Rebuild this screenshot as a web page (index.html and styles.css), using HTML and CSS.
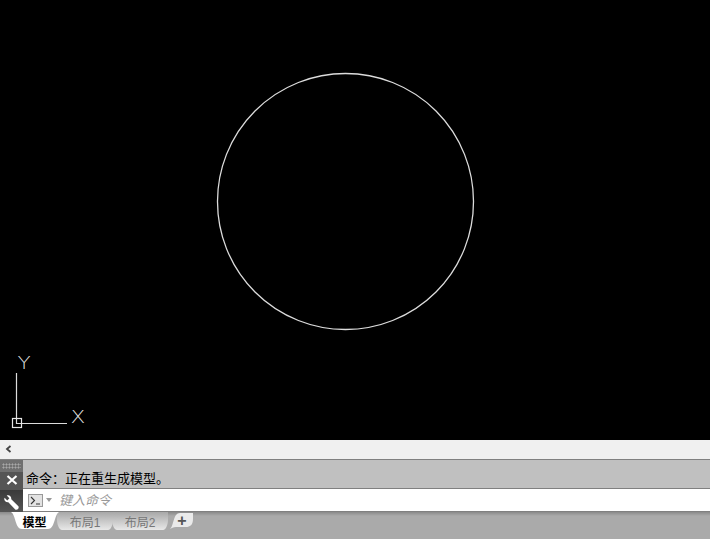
FILE: index.html
```html
<!DOCTYPE html>
<html lang="zh-CN">
<head>
	<meta charset="UTF-8">
	<title>模型</title>
	<link rel="stylesheet" href="styles.css">
</head>
<body>
	<div class="canvas">
		<svg class="drawing" width="710" height="440" viewBox="0 0 710 440">
			<circle cx="345.5" cy="201.5" r="128" fill="none" stroke="#dcdcdc" stroke-width="1.3"/>
			<path d="M16.5 373V424M17 423.5H67" fill="none" stroke="#dcdcdc" stroke-width="1.2"/>
			<rect x="12.5" y="418.5" width="9" height="9" fill="none" stroke="#e6e6e6" stroke-width="1.2"/>
			<text class="axis" transform="translate(17.500 369) scale(1.2 1)">Y</text>
			<text class="axis" transform="translate(70.500 422.500) scale(1.2 1)">X</text>
		</svg>
	</div>
	<div class="scrollbar"><span class="arrow">
		<svg width="7" height="8" viewBox="0 0 7 8"><path d="M5.5 1L2 4L5.5 7" fill="none" stroke="#444" stroke-width="1.8"/></svg>
	</span></div>
	<div class="command">
		<div class="side">
			<div class="grip"><div class="dots"></div></div>
			<div class="close">
				<svg width="12" height="12" viewBox="0 0 12 12"><path d="M1.500 2L10.500 10M10.500 2L1.500 10" stroke="#fff" stroke-width="2.2"/></svg>
			</div>
			<div class="wrench">
				<svg width="17" height="17" viewBox="0 0 16 16"><path d="M1.500 3.500L4 6L6 4L3.500 1.500C5.500 .5 8 1.800 7.800 5L14.500 11.500C15.500 13.500 13.500 15.500 11.500 14.500L5 7.800C2 8 .5 5.500 1.500 3.500Z" fill="#fff"/></svg>
			</div>
		</div>
		<div class="main">
			<div class="history">命令：正在重生成模型。</div>
			<div class="input">
				<span class="prompt">
					<svg width="15" height="13" viewBox="0 0 15 13"><rect x=".5" y=".5" width="14" height="12" fill="#e2e2e2" stroke="#999"/><path d="M3 3L6.500 6.500L3 10M8 10H12" fill="none" stroke="#333" stroke-width="1.100"/></svg>
				</span>
				<span class="caret"></span>
				<span class="hint">键入命令</span>
			</div>
		</div>
	</div>
	<div class="tabs">
		<div class="tab active">
			<svg class="tab-bg" width="48" height="18" viewBox="0 0 48 18"><path d="M0 0H48C43 3 44 17 37 17H11C4 17 5 3 0 0Z" fill="#fff"/></svg>
			<span>模型</span>
		</div>
		<div class="tab">
			<svg class="tab-bg" width="56" height="18" viewBox="0 0 56 18"><defs><linearGradient id="fade" x1="0" y1="0" x2="0" y2="1"><stop offset="0" stop-color="#a8a8a8"/><stop offset="1" stop-color="#e8e8e8"/></linearGradient></defs><path d="M0 0H56V8C56 12 54 18 51 18H5C2 18 0 12 0 8Z" fill="url(#fade)"/></svg>
			<span>布局1</span>
		</div>
		<div class="tab">
			<svg class="tab-bg" width="56" height="18" viewBox="0 0 56 18"><path d="M0 0H56V8C56 12 54 18 51 18H5C2 18 0 12 0 8Z" fill="url(#fade)"/></svg>
			<span>布局2</span>
		</div>
		<div class="tab plus">
			<svg class="tab-bg" width="24" height="18" viewBox="0 0 24 18"><path d="M0 17C4 14 3 1 10 1H23V7C23 13 20 15 16 15H6C3 15 2 16 0 17Z" fill="#eaeaea"/></svg>
			<span>+</span>
		</div>
	</div>
</body>
</html>
```

FILE: styles.css
```css
*{
	box-sizing: border-box;
}
body{
	margin: 0;
	width: 710px;
	height: 539px;
	overflow: hidden;
	background-color: #aaa;
	font-family: "Liberation Sans", "Noto Sans CJK SC", sans-serif;
}
.canvas{
	height: 440px;
	background-color: #000;
}
.drawing{
	display: block;
}
.axis{
	font-family: "DejaVu Sans", sans-serif;
	font-weight: 200;
	font-size: 18px;
	fill: #dcdcdc;
}
.scrollbar{
	height: 20px;
	background-color: #f0f0f0;
	border-bottom: 1px solid #808080;
	display: flex;
	align-items: center;
	padding: 0 0 2px 5px;
}
.arrow{
	display: flex;
}
.command{
	height: 52px;
	display: flex;
}
.side{
	width: 23px;
	display: flex;
	flex-direction: column;
}
.grip{
	height: 12px;
	padding: 3px 2px 0 2px;
	background-color: #707070;
}
.dots{
	height: 6px;
	background-image: radial-gradient(#a8a8a8 45%, transparent 50%);
	background-size: 3px 3px;
}
.close{
	height: 18px;
	padding-bottom: 2px;
	display: flex;
	justify-content: center;
	align-items: center;
	background-color: #555;
}
.wrench{
	flex: 1;
	display: flex;
	justify-content: center;
	align-items: center;
	padding-top: 3px;
	background: linear-gradient(#3a3a3a, #555);
}
.main{
	flex: 1;
	display: flex;
	flex-direction: column;
}
.history{
	height: 29px;
	background-color: #c0c0c0;
	border-bottom: 1px solid #808080;
	padding: 10px 0 0 3px;
	font-size: 13px;
	line-height: 17px;
	color: #000;
}
.input{
	flex: 1;
	background-color: #fff;
	border-bottom: 1px solid #808080;
	display: flex;
	align-items: center;
	padding-left: 5px;
}
.prompt{
	display: flex;
}
.caret{
	width: 0;
	height: 0;
	margin-left: 3px;
	border-left: 3px solid transparent;
	border-right: 3px solid transparent;
	border-top: 4px solid #999;
}
.hint{
	margin: 0 0 2px 7px;
	font-size: 13px;
	font-style: italic;
	color: #999;
}
.tabs{
	height: 27px;
	display: flex;
	padding-left: 11px;
	background: linear-gradient(#8a8a8a, #aaa 4px);
}
.tab{
	position: relative;
	width: 56px;
	height: 18px;
	display: flex;
	justify-content: center;
	align-items: center;
	font-size: 12px;
	color: #777;
	margin-right: -1px;
}
.tab span{
	position: relative;
}
.tab-bg{
	position: absolute;
	left: 0;
	top: 0;
}
.tab.active{
	width: 47px;
	color: #000;
	font-weight: bold;
	margin-right: -1px;
	z-index: 1;
}
.tab.plus{
	width: 24px;
	margin-left: 3px;
	color: #555;
	font-size: 16px;
	font-weight: bold;
}
```
